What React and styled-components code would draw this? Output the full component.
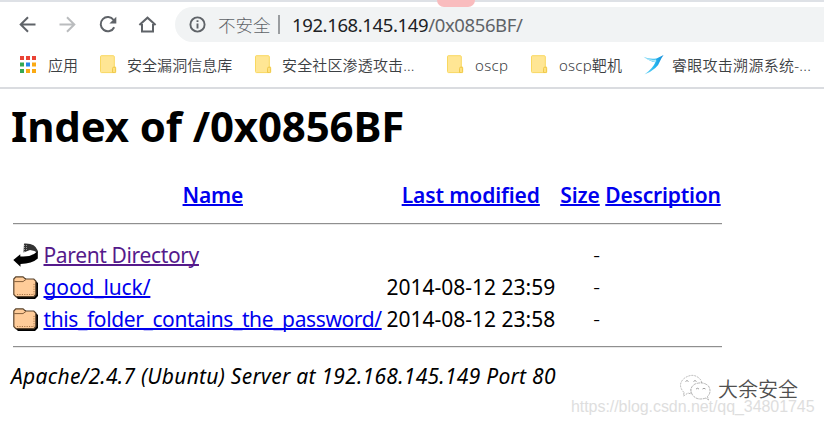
import React from "react";
import styled, { createGlobalStyle } from "styled-components";

const Global = createGlobalStyle`
  * { box-sizing: border-box; }
  body { margin: 0; background: #fff; overflow: hidden; }
`;

const Window = styled.div`
  position: relative;
  width: 824px;
  height: 425px;
  overflow: hidden;
  background: #fff;
  color: #000;
  font-family: "Noto Sans", "Noto Sans CJK SC", sans-serif;
`;
const Chrome = styled.header`
  height: 89px;
  border-top: 2px solid #dee1e6;
  border-bottom: 2px solid #dadce0;
`;
const Toolbar = styled.div`
  display: flex;
  height: 40px;
  padding: 5px 0 0 15px;
`;
const NavButton = styled.div`
  width: 40px;
  height: 35px;
  padding: 6px 0 0 1px;
  color: ${(p) => (p.$disabled ? "#babcbe" : "#5f6368")};
  svg { display: block; }
`;
const AddressBar = styled.div`
  display: flex;
  align-items: center;
  flex: 1;
  height: 35px;
  padding-left: 14px;
  background: #f1f3f4;
  border-radius: 18px 0 0 18px;
  white-space: nowrap;
  color: #5f6368;
`;
const Insecure = styled.span`
  margin-left: 12px;
  width: 60px;
  font: 300 17.5px/34px "Noto Sans CJK SC", sans-serif;
`;
const Divider = styled.span`
  width: 2px;
  height: 19px;
  margin-right: 12px;
  background: #9a9da0;
`;
const Url = styled.span`
  font-size: 18.5px;
  line-height: 34px;
  letter-spacing: ${(p) => p.$spacing || 0}px;
  b { font-weight: 400; color: #202124; }
`;
const TabMark = styled.i`
  position: absolute;
  left: 437px;
  top: 0;
  width: 38px;
  height: 7px;
  border-radius: 0 0 7px 7px;
  background: #f9bcbe;
`;
const Bookmarks = styled.nav`
  display: flex;
  height: 45px;
  padding-left: 19px;
`;
const Bookmark = styled.div`
  display: flex;
  flex: none;
  align-items: center;
  width: ${(p) => p.$width}px;
  color: #3c4043;
  font: 350 15px/46px "Noto Sans", "Noto Sans CJK SC", sans-serif;
  letter-spacing: ${(p) => p.$spacing || 0}px;
  white-space: nowrap;
  svg { flex: none; margin-right: ${(p) => p.$gap}px; }
`;
const Page = styled.main`
  padding: 9px 0 0 11px;
`;
const Title = styled.h1`
  margin: 0;
  height: 81px;
  font-size: 42px;
  line-height: 55px;
  font-weight: 700;
  letter-spacing: ${(p) => p.$spacing}px;
  white-space: nowrap;
`;
const Listing = styled.div`
  width: 709px;
  margin-left: 2px;
  font-size: 21px;
  line-height: 32px;
`;
const Row = styled.div`
  display: grid;
  grid-template-columns: 26px 338.5px 168.5px 41px 116px;
  column-gap: 4.5px;
  height: 32px;
  white-space: nowrap;
  svg { margin-top: 4px; }
`;
const HeadCell = styled.div`
  text-align: center;
  font-weight: 600;
`;
const Size = styled.div`
  padding-right: 0.5px;
  font-weight: 300;
  text-align: right;
`;
const Link = styled.a`
  color: ${(p) => (p.$visited ? "#551a8b" : "#0000ee")};
  letter-spacing: ${(p) => p.$spacing || 0}px;
  text-decoration: underline;
  text-decoration-thickness: 2px;
  text-underline-offset: 1px;
  text-decoration-skip-ink: none;
`;
const Stamp = styled.span`
  letter-spacing: ${(p) => p.$spacing}px;
`;
const Rule = styled.div`
  height: 2px;
  margin: ${(p) => p.$margin};
  border-top: 1px solid #8f8f8f;
  border-bottom: 1px solid #e8e8e8;
`;
const Footer = styled.address`
  font-size: 21px;
  line-height: 30px;
  letter-spacing: ${(p) => p.$spacing}px;
  white-space: nowrap;
`;
const Watermark = styled.div`
  position: absolute;
  left: 571px;
  top: 397px;
  color: #dedede;
  font: 16px/20px "Liberation Sans", sans-serif;
  letter-spacing: ${(p) => p.$spacing}px;
  white-space: nowrap;
`;
const Account = styled.div`
  position: absolute;
  left: 679px;
  top: 374px;
  display: flex;
  gap: 7px;
  color: #505050;
  font: 350 20px/30px "Noto Sans CJK SC", sans-serif;
  text-shadow: 1px 1px 0 #fff;
`;

const stroke = { fill: "none", stroke: "currentColor", strokeWidth: 2 };

const Back = () => (
  <svg width="24" height="24" viewBox="0 0 24 24" {...stroke}><path d="M19.5 11.5H5M12 4.2L4.7 11.5L12 18.8" /></svg>
);
const Forward = () => (
  <svg width="24" height="24" viewBox="0 0 24 24" {...stroke}><path d="M3.5 11.5H18M11 4.2L18.3 11.5L11 18.8" /></svg>
);
const Reload = () => (
  <svg width="24" height="24" viewBox="0 0 24 24" {...stroke}>
    <path d="M17.6 7A7.1 7.1 0 1 0 18.2 14.2" />
    <path d="M20.3 3.7V10.4H13.4Z" fill="currentColor" stroke="none" />
  </svg>
);
const Home = () => (
  <svg width="24" height="24" viewBox="0 0 24 24" {...stroke}>
    <path d="M3.4 12.1L11.5 4.7L19.6 12.1M6 11V18.6H17V11" />
  </svg>
);
const Info = () => (
  <svg width="17" height="17" viewBox="0 0 17 17" {...stroke} strokeWidth="1.9">
    <circle cx="8.5" cy="8.5" r="7.1" /><path d="M8.5 7.4V12.6M8.5 4.2V6.1" />
  </svg>
);
const dots = ["#ea4335", "#ea4335", "#ea4335", "#34a853", "#2585e8", "#fbaa13", "#34a853", "#fbaa13", "#fbaa13"];
const Apps = () => (
  <svg width="18" height="18" viewBox="0 0 18 18">
    {dots.map((c, i) => <rect key={i} x={1 + (i % 3) * 6} y={Math.floor(i / 3) * 6.5} width="4" height="4" fill={c} />)}
  </svg>
);
const YellowFolder = () => (
  <svg width="17" height="19" viewBox="0 0 17 19">
    <path d="M1.2.7H13.3Q14.3.7 14.3 1.7V12H15.6V17.6H1.5Q.5 17.6.5 16.6V1.7Q.5.7 1.2.7Z" fill="#ffe694" stroke="#f9d860" />
    <path d="M12.5 17.5V13.5Q12.5 12.1 14 12.1Q15.6 12.1 15.6 13.5V16.5Q15.6 17.5 14.5 17.5Z" fill="#ffe17c" stroke="#efc94c" />
  </svg>
);
const Bird = () => (
  <svg width="22" height="22" viewBox="0 0 22 22">
    <defs><linearGradient id="wing" x1="0" x2="1"><stop stopColor="#82d9f6" /><stop offset=".55" stopColor="#25b8f0" /><stop offset="1" stopColor="#168bd8" /></linearGradient></defs>
    <path d="M.5 2.7Q7 5.7 13.5 4.4L20.6 1Q18.6 3.7 17.2 6.7Q14.5 15.2 1.4 20.5Q10 14.2 12.4 8.2Q7 7.5.5 2.7Z" fill="url(#wing)" />
    <path d="M1 3.3Q7 6.7 13 5.4Q14 7.4 12.2 8.3Q6 7 1 3.3Z" fill="#b6e9f8" />
  </svg>
);
const UpArrow = () => (
  <svg width="26" height="26" viewBox="0 0 26 26">
    <path d="M11 .5Q22 -.3 24.7 7.5V10Q22 7.5 17 7L10.5 9.5Z" fill="#333" />
    <path d="M11.5 0V9M13.5 0V8" stroke="#aaa" strokeWidth=".8" strokeDasharray="1 1" />
    <path d="M.3 17L7.3 11.3V13.4Q19 14.4 24.8 8V15.5Q19 20.8 7.5 21V23.8Z" fill="#000" />
  </svg>
);
const DirIcon = () => (
  <svg width="26" height="26" viewBox="0 0 26 26">
    <path d="M3.5 3H12L14.5 5H22L25 8V21L22 24H5L2 21Z" fill="#000" />
    <path d="M.8 4L2.8 1.8H10L12.4 4H20.8L22.8 6V19.5L20.8 21.7H2.8L.8 19.5Z" fill="#ffcc99" stroke="#5b452e" strokeWidth="1.2" />
    <path d="M1.2 6.6H10L13 4.4" fill="none" stroke="#865f3b" />
    <path d="M4 19.5H21V8" fill="none" stroke="#a87547" strokeDasharray="1.2 1.2" />
  </svg>
);
const WeChat = () => (
  <svg width="32" height="29" viewBox="0 0 32 29" fill="#fff" stroke="#999" strokeWidth=".7">
    <path d="M5 18.5Q-2 11 5 4.5Q14-2 21 5Q23 7.5 22.5 10Q14 10 12 15V20L9 19L4.5 22Z" strokeDasharray="2 1" />
    <path d="M27 24Q18 27 13.5 21Q9.5 14 16 10Q24 7 29.5 12Q33 18 28.5 22.5L29.5 26Z" strokeDasharray="3 .7" />
    <path d="M6.5 7.5Q8 5.5 9.5 7.5M14.5 7.5Q16 5.5 17.5 7.5M17 15Q18.5 13.5 20 15M23.5 15Q25 13.5 26.5 15" fill="none" stroke="#777" />
  </svg>
);

const bookmarks = [
  { icon: Apps, text: "应用", width: 81, gap: 11 },
  { icon: YellowFolder, text: "安全漏洞信息库", width: 155, gap: 10, spacing: 0.05 },
  { icon: YellowFolder, text: "安全社区渗透攻击...", width: 192, gap: 10, spacing: 0.15 },
  { icon: YellowFolder, text: "oscp", width: 84, gap: 11, spacing: 0.3 },
  { icon: YellowFolder, text: "oscp靶机", width: 112, gap: 11, spacing: 0.2 },
  { icon: Bird, text: "睿眼攻击溯源系统-...", width: 181, gap: 7, spacing: 0.28 },
];

const entries = [
  { icon: UpArrow, name: "Parent Directory", visited: true, spacing: -0.36, date: "" },
  { icon: DirIcon, name: "good_luck/", spacing: -0.12, date: "2014-08-12 23:59" },
  { icon: DirIcon, name: "this_folder_contains_the_password/", spacing: -0.38, date: "2014-08-12 23:58" },
];

export default function App() {
  return (
    <Window>
      <Global />
      <Chrome>
        <Toolbar>
          <NavButton><Back /></NavButton>
          <NavButton $disabled><Forward /></NavButton>
          <NavButton><Reload /></NavButton>
          <NavButton><Home /></NavButton>
          <AddressBar>
            <Info />
            <Insecure>不安全</Insecure>
            <Divider />
            <Url $spacing={-0.38}><b>192.168.145.149</b>/0x0856BF/</Url>
          </AddressBar>
        </Toolbar>
        <Bookmarks>
          {bookmarks.map(({ icon: Icon, ...b }) => (
            <Bookmark key={b.text} $width={b.width} $gap={b.gap} $spacing={b.spacing}><Icon />{b.text}</Bookmark>
          ))}
        </Bookmarks>
      </Chrome>
      <TabMark />
      <Page>
        <Title $spacing={-0.15}>Index of /0x0856BF</Title>
        <Listing>
          <Row>
            <span />
            <HeadCell><Link $spacing={-0.25}>Name</Link></HeadCell>
            <HeadCell><Link $spacing={-0.1}>Last modified</Link></HeadCell>
            <HeadCell><Link $spacing={-0.1}>Size</Link></HeadCell>
            <HeadCell><Link $spacing={-0.2}>Description</Link></HeadCell>
          </Row>
          <Rule $margin="12px 0 14px" />
          {entries.map(({ icon: Icon, ...e }) => (
            <Row key={e.name}>
              <Icon />
              <div><Link $visited={e.visited} $spacing={e.spacing}>{e.name}</Link></div>
              <Stamp $spacing={0}>{e.date}</Stamp>
              <Size>-</Size>
            </Row>
          ))}
          <Rule $margin="11px 0 13px" />
        </Listing>
        <Footer $spacing={0.27}>Apache/2.4.7 (Ubuntu) Server at 192.168.145.149 Port 80</Footer>
      </Page>
      <Watermark $spacing={-0.06}>https://blog.csdn.net/qq_34801745</Watermark>
      <Account><WeChat />大余安全</Account>
    </Window>
  );
}
